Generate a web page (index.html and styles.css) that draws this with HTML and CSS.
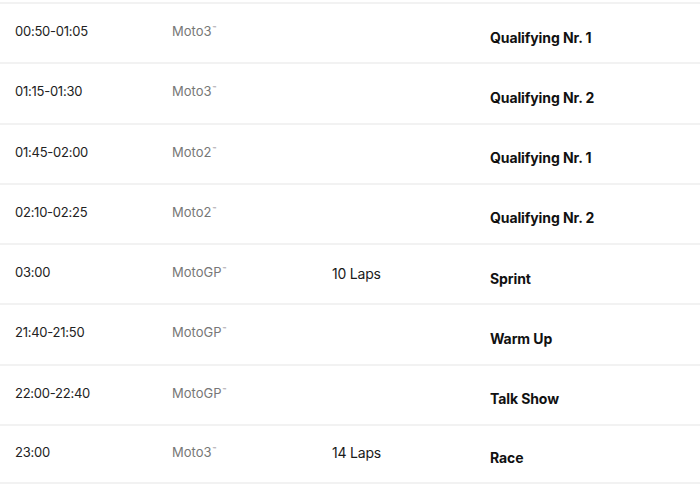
FILE: index.html
```html
<!DOCTYPE html>
<html>
<head>
<meta charset="utf-8">
<link rel="stylesheet" href="styles.css">
</head>
<body>
<div class="schedule">
  <div class="row"><div class="time">00:50-01:05</div><div class="cls">Moto3<sup>™</sup></div><div class="laps"></div><div class="title">Qualifying Nr. 1</div></div>
  <div class="row"><div class="time">01:15-01:30</div><div class="cls">Moto3<sup>™</sup></div><div class="laps"></div><div class="title">Qualifying Nr. 2</div></div>
  <div class="row"><div class="time">01:45-02:00</div><div class="cls">Moto2<sup>™</sup></div><div class="laps"></div><div class="title">Qualifying Nr. 1</div></div>
  <div class="row"><div class="time">02:10-02:25</div><div class="cls">Moto2<sup>™</sup></div><div class="laps"></div><div class="title">Qualifying Nr. 2</div></div>
  <div class="row"><div class="time">03:00</div><div class="cls">MotoGP<sup>™</sup></div><div class="laps">10 Laps</div><div class="title">Sprint</div></div>
  <div class="row"><div class="time">21:40-21:50</div><div class="cls">MotoGP<sup>™</sup></div><div class="laps"></div><div class="title">Warm Up</div></div>
  <div class="row"><div class="time">22:00-22:40</div><div class="cls">MotoGP<sup>™</sup></div><div class="laps"></div><div class="title">Talk Show</div></div>
  <div class="row"><div class="time">23:00</div><div class="cls">Moto3<sup>™</sup></div><div class="laps">14 Laps</div><div class="title">Race</div></div>
</div>
</body>
</html>
```
FILE: styles.css
```css
html, body {
  margin: 0;
  padding: 0;
  background: #ffffff;
}
body {
  font-family: "Inter", "Liberation Sans", sans-serif;
  color: #1a1a1a;
}
.schedule {
  padding-top: 2px;
}
.row {
  display: grid;
  grid-template-columns: 157px 160px 158px 1fr;
  padding-left: 15px;
  height: 60.25px;
  box-sizing: border-box;
  border-top: 2px solid #f2f2f2;
  align-items: center;
}
.row:last-child {
  border-bottom: 2px solid #f2f2f2;
}
.time {
  font-size: 13px;
  letter-spacing: -0.25px;
  color: #222;
  margin-top: -4px;
}
.cls {
  font-size: 13px;
  color: #777;
  margin-top: -4px;
}
.cls sup {
  font-size: 6px;
  vertical-align: 5px;
  margin-left: 1px;
}
.laps {
  font-size: 14px;
  letter-spacing: -0.2px;
  color: #1a1a1a;
  margin-top: -2px;
}
.title {
  font-size: 14px;
  font-weight: 700;
  letter-spacing: -0.1px;
  color: #111;
  margin-top: 8px;
}
```
